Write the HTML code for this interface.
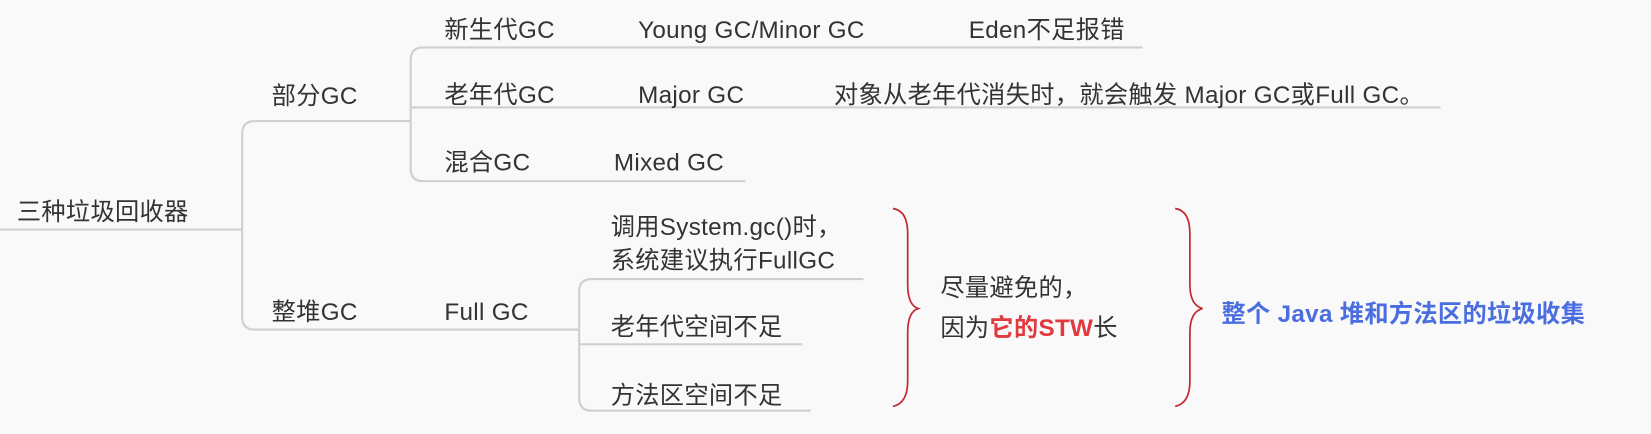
<!DOCTYPE html>
<html><head><meta charset="utf-8"><style>
html,body{margin:0;padding:0}
body{width:1651px;height:433px;background:#f9f9f9;position:relative;overflow:hidden;font-family:"Liberation Sans","Noto Sans CJK SC",sans-serif;color:#333}
#w{position:absolute;left:0;top:0;width:1568px;height:412px;transform:scale(1.053);transform-origin:0 0}
.t{position:absolute;font-size:23px;line-height:28px;white-space:nowrap;letter-spacing:0.3px}
svg{position:absolute;left:0;top:0}
</style></head><body><div id="w">
<svg width="1568" height="412" fill="none">
<g stroke="#cfcfcf" stroke-width="2">
<path d="M0 218 H230 M242 115 H390"/>
<path d="M242 115 Q230 115 230 127 V301 Q230 313 242 313 H550"/>
<path d="M402 45 Q390 45 390 57 V160 Q390 172 402 172 H708"/>
<path d="M390 102 H1368 M402 45 H1085"/>
<path d="M562 265 Q550 265 550 277 V378 Q550 390 562 390 H770 M550 313 V277 M550 327 H762 M562 265 H820"/>
</g>
<g stroke="#c0282d" stroke-width="1.6">
<path d="M848 198 Q862 200 862 222 V270 Q862 290 872 293 Q862 296 862 316 V362 Q862 383 848 386"/>
<path d="M1116 198 Q1130 200 1130 222 V270 Q1130 290 1142 293 Q1130 296 1130 316 V362 Q1130 383 1116 386"/>
</g>
</svg>
<div class="t" style="left:16px;top:187px">三种垃圾回收器</div>
<div class="t" style="left:258px;top:77px">部分GC</div>
<div class="t" style="left:258px;top:282px">整堆GC</div>
<div class="t" style="left:422px;top:14px">新生代GC</div>
<div class="t" style="left:606px;top:14px">Young GC/Minor GC</div>
<div class="t" style="left:920px;top:14px">Eden不足报错</div>
<div class="t" style="left:422px;top:76px">老年代GC</div>
<div class="t" style="left:606px;top:76px">Major GC</div>
<div class="t" style="left:792px;top:76px">对象从老年代消失时，就会触发 Major GC或Full GC。</div>
<div class="t" style="left:422px;top:140px">混合GC</div>
<div class="t" style="left:583px;top:140px">Mixed GC</div>
<div class="t" style="left:422px;top:282px">Full GC</div>
<div class="t" style="left:580px;top:201px">调用System.gc()时，</div>
<div class="t" style="left:580px;top:233px">系统建议执行FullGC</div>
<div class="t" style="left:580px;top:296px">老年代空间不足</div>
<div class="t" style="left:580px;top:361px">方法区空间不足</div>
<div class="t" style="left:893px;top:259px">尽量避免的，</div>
<div class="t" style="left:893px;top:297px">因为<b style="color:#e0393e">它的STW</b>长</div>
<div class="t" style="left:1160px;top:284px;color:#4a6ee0;font-weight:bold">整个 Java 堆和方法区的垃圾收集</div>
</div></body></html>
